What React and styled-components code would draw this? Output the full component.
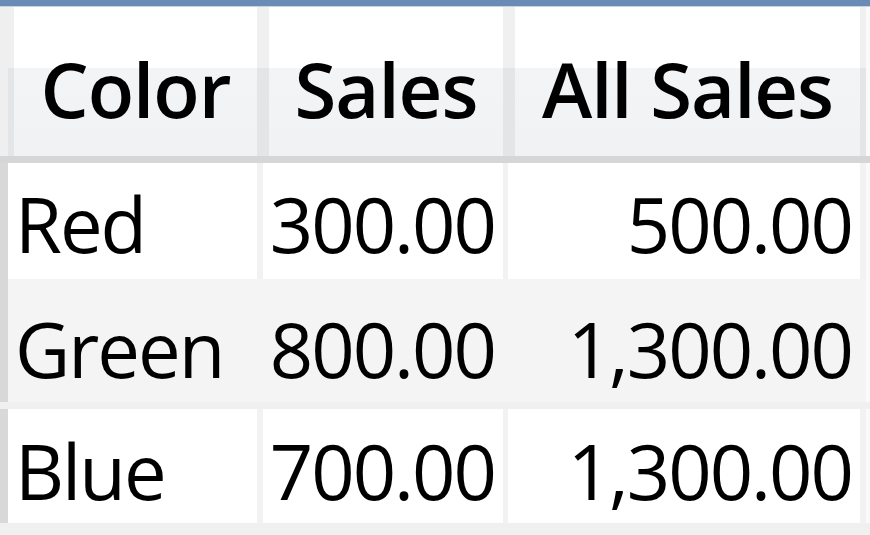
import React from 'react';
import styled, { createGlobalStyle } from 'styled-components';

const GlobalStyle = createGlobalStyle`
  html, body {
    margin: 0;
    padding: 0;
    background: #f0f0f0;
    overflow: hidden;
  }
`

const Sheet = styled.div`
  width: 870px;
  height: 535px;
  background: #f0f0f0;
  font-family: "Open Sans", "Noto Sans", sans-serif;
  color: #000;
`

const TopBar = styled.div`
  height: 6px;
  background: #6a8bb3;
  border-bottom: 1px solid #c9d3df;
`

const HeaderRow = styled.div`
  display: flex;
  height: 149px;
  border-bottom: 7px solid #d6d6d6;
`

const HeaderGutter = styled.div`
  width: ${p => p.w}px;
  flex: none;
  background: ${p => p.bg || 'linear-gradient(#f0f0f0 0 61px, #e4e5e7 61px)'};
`

const HeaderCell = styled.div`
  width: ${p => p.w}px;
  flex: none;
  display: flex;
  align-items: flex-end;
  justify-content: center;
  padding-bottom: 29px;
  box-sizing: border-box;
  background: linear-gradient(#ffffff 0 61px, #f3f4f6 61px, #f1f2f4 100%);
  font-weight: 600;
  font-size: 76px;
  letter-spacing: -1px;
  line-height: 1;
  white-space: nowrap;
`

const BodyRow = styled.div`
  display: flex;
  height: ${p => p.h}px;
  margin-bottom: ${p => p.gap || 0}px;
  background: ${p => p.alt ? '#f4f4f4' : '#f2f2f2'};
`

const Gutter = styled.div`
  width: ${p => p.w}px;
  flex: none;
  background: ${p => p.bg || 'transparent'};
`

const Cell = styled.div`
  width: ${p => p.w}px;
  flex: none;
  display: flex;
  align-items: flex-end;
  justify-content: ${p => p.right ? 'flex-end' : 'flex-start'};
  padding: 0 ${p => p.right ? '8px' : '0'} ${p => p.pb}px ${p => p.right ? '0' : '7px'};
  box-sizing: border-box;
  background: ${p => p.alt ? '#f4f4f4' : '#ffffff'};
  font-size: 76px;
  letter-spacing: -2px;
  line-height: 1;
  white-space: nowrap;
`

const rows = [
  { color: 'Red', sales: '300.00', all: '500.00', h: 116, pb: 17 },
  { color: 'Green', sales: '800.00', all: '1,300.00', h: 123, pb: 15, alt: true, gap: 7 },
  { color: 'Blue', sales: '700.00', all: '1,300.00', h: 114, pb: 14 },
];

export default function App() {
  return (
    <Sheet>
      <GlobalStyle />
      <TopBar />
      <HeaderRow>
        <HeaderGutter w={8} bg="#efefef" />
        <HeaderGutter w={6} />
        <HeaderCell w={243}>Color</HeaderCell>
        <HeaderGutter w={12} />
        <HeaderCell w={234}>Sales</HeaderCell>
        <HeaderGutter w={12} />
        <HeaderCell w={345}>All Sales</HeaderCell>
        <HeaderGutter w={6} />
        <HeaderGutter w={4} bg="#fafafa" />
      </HeaderRow>
      {rows.map(r => (
        <BodyRow key={r.color} h={r.h} gap={r.gap} alt={r.alt}>
          <Gutter w={8} bg="#d8d8d8" />
          <Cell w={249} pb={r.pb} alt={r.alt}>{r.color}</Cell>
          <Gutter w={6} />
          <Cell w={240} pb={r.pb} right alt={r.alt}>{r.sales}</Cell>
          <Gutter w={5} />
          <Cell w={352} pb={r.pb} right alt={r.alt}>{r.all}</Cell>
          <Gutter w={6} />
          <Gutter w={4} bg="#fafafa" />
        </BodyRow>
      ))}
    </Sheet>
  );
}
